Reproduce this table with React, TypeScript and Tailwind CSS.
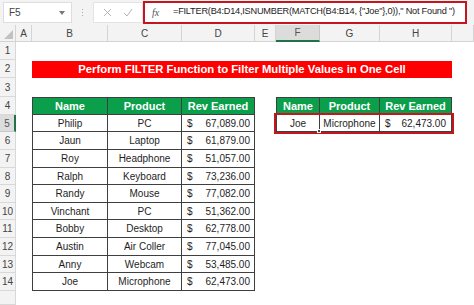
import React from "react";

interface Row {
  name: string;
  product: string;
  rev: string;
}

const data: Row[] = [
  { name: "Philip", product: "PC", rev: "67,089.00" },
  { name: "Jaun", product: "Laptop", rev: "61,879.00" },
  { name: "Roy", product: "Headphone", rev: "51,057.00" },
  { name: "Ralph", product: "Keyboard", rev: "73,236.00" },
  { name: "Randy", product: "Mouse", rev: "77,082.00" },
  { name: "Vinchant", product: "PC", rev: "51,362.00" },
  { name: "Bobby", product: "Desktop", rev: "62,778.00" },
  { name: "Austin", product: "Air Coller", rev: "77,045.00" },
  { name: "Anny", product: "Webcam", rev: "53,485.00" },
  { name: "Joe", product: "Microphone", rev: "62,473.00" },
];

const letters = ["A", "B", "C", "D", "E", "F", "G", "H", ""];

const FormulaBar = () => (
  <div className="h-[25px] bg-[#f3f3f3] flex items-center pl-[3px] pr-[7px]">
    {/* name box */}
    <div className="shrink-0 w-[69px] h-[21px] bg-white border border-[#dedede] flex items-center justify-between pl-[5px] pr-[6px]">
      <span className="text-[10px] text-[#444]">F5</span>
      <svg width="6" height="4" viewBox="0 0 6 4">
        <path d="M0 0 L6 0 L3 4 Z" fill="#777" />
      </svg>
    </div>
    {/* dotted separator */}
    <div className="shrink-0 w-[21px] flex flex-col items-center gap-[2px]">
      <span className="w-[1px] h-[1px] bg-[#aaa]" />
      <span className="w-[1px] h-[1px] bg-[#aaa]" />
      <span className="w-[1px] h-[1px] bg-[#aaa]" />
    </div>
    {/* cancel / enter */}
    <div className="shrink-0 w-[50px] h-[21px] bg-white border border-[#e4e4e4] flex items-center justify-around px-[4px]">
      <svg width="9" height="9" viewBox="0 0 9 9">
        <path d="M1 1 L8 8 M8 1 L1 8" stroke="#b5b5b5" strokeWidth="1" />
      </svg>
      <svg width="10" height="9" viewBox="0 0 10 9">
        <path d="M1 5 L4 8 L9 1" stroke="#b5b5b5" strokeWidth="1" fill="none" />
      </svg>
    </div>
    {/* formula input with red highlight */}
    <div className="flex-1 min-w-0 overflow-hidden h-[23px] -mt-[1px] bg-white border-2 border-[#c4161c] flex items-center">
      <span className="shrink-0 w-[27px] pl-[7px] text-[10px] italic text-[#555] font-['Liberation_Serif',serif]">
        fx
      </span>
      <span className="pl-[1px] text-[9.2px] tracking-[-0.22px] text-[#222] whitespace-nowrap">
        =FILTER(B4:D14,ISNUMBER(MATCH(B4:B14, {"{"}"Joe"{"}"},0)),"
        Not Found ")
      </span>
    </div>
  </div>
);

const hdr = "bg-[#0b9f4c] text-white font-bold text-[11px] flex items-center justify-center";
const cellBase = "flex items-center text-[10px] text-[#1e1e1e]";

const renderTableRow = (r: number) => {
  const out: React.ReactNode[] = [];
  // column A
  out.push(<div key="a" className="bg-white" />);

  if (r === 1 || r === 3 || r === 15) {
    for (let i = 0; i < 8; i++) out.push(<div key={i} className="bg-white" />);
    return out;
  }

  if (r === 2) {
    out.push(
      <div
        key="title"
        className="col-span-7 mt-[1px] bg-[#ff0000] text-white font-bold text-[11.3px] flex items-center justify-center"
      >
        Perform FILTER Function to Filter Multiple Values in One Cell
      </div>
    );
    out.push(<div key="i" className="bg-white" />);
    return out;
  }

  if (r === 4) {
    out.push(
      <div key="b" className={`${hdr} border border-[#3f3f3f]`}>Name</div>,
      <div key="c" className={`${hdr} border-y border-r border-[#3f3f3f]`}>Product</div>,
      <div key="d" className={`${hdr} border-y border-r border-[#3f3f3f]`}>Rev Earned</div>,
      <div key="e" className="bg-white" />,
      <div key="f" className={`${hdr} border-y border-l border-r border-[#3f3f3f]`}>Name</div>,
      <div key="g" className={`${hdr} border-y border-r border-[#3f3f3f]`}>Product</div>,
      <div key="h" className={`${hdr} border-y border-r border-[#3f3f3f]`}>Rev Earned</div>,
      <div key="i" className="bg-white" />
    );
    return out;
  }

  const d = data[r - 5];
  out.push(
    <div key="b" className={`${cellBase} justify-center border-l border-r border-b border-[#3f3f3f]`}>
      {d.name}
    </div>,
    <div key="c" className={`${cellBase} justify-center border-r border-b border-[#3f3f3f]`}>
      {d.product}
    </div>,
    <div key="d" className={`${cellBase} justify-between pl-[5px] pr-[4px] border-r border-b border-[#3f3f3f]`}>
      <span>$</span>
      <span>{d.rev}</span>
    </div>,
    <div key="e" className="bg-white" />
  );

  if (r === 5) {
    out.push(
      <div
        key="fgh"
        className="col-span-3 grid grid-cols-[44px_60px_72px] border-b border-[#3f3f3f] outline-2 outline-offset-0 outline-[#c4161c] relative"
      >
        <div className={`${cellBase} justify-center border-l border-r border-[#3f3f3f] relative`}>
          Joe
          <span className="absolute -right-[2px] -bottom-[2px] w-[4px] h-[4px] bg-[#444] border border-white" />
        </div>
        <div className={`${cellBase} justify-center border-r border-[#3f3f3f]`}>Microphone</div>
        <div className={`${cellBase} justify-between pl-[5px] pr-[5px] border-r border-[#3f3f3f]`}>
          <span>$</span>
          <span>62,473.00</span>
        </div>
      </div>
    );
  } else {
    for (let i = 0; i < 3; i++) out.push(<div key={"x" + i} className="bg-white" />);
  }
  out.push(<div key="i" className="bg-white" />);
  return out;
};

const App = () => {
  const rows = Array.from({ length: 15 }, (_, i) => i + 1);
  return (
    <div className="w-[474px] h-[305px] overflow-hidden bg-white font-['Liberation_Sans',Arial,sans-serif]">
      <FormulaBar />
      <div className="grid grid-cols-[16px_16px_76px_74px_73px_21px_44px_60px_72px_1fr] grid-rows-[17px_18px_18px_19px_18px_17px_18px_18px_17px_18px_17px_18px_18px_17px_18px_14px]">
        {/* corner */}
        <div className="bg-[#f3f3f3] border-r border-b border-[#d4d4d4] flex items-end justify-end pr-[2px] pb-[2px]">
          <svg width="9" height="9" viewBox="0 0 9 9">
            <path d="M9 0 L9 9 L0 9 Z" fill="#c2c2c2" />
          </svg>
        </div>
        {letters.map((l, i) => (
          <div
            key={"col" + i}
            className={
              l === "F"
                ? "bg-[#dcdcdc] border-r border-[#c8c8c8] border-b-2 border-b-[#217346] flex items-center justify-center text-[10px] text-[#555]"
                : "bg-[#f3f3f3] border-r border-b border-[#d4d4d4] flex items-center justify-center text-[10px] text-[#444]"
            }
          >
            {l}
          </div>
        ))}
        {rows.map((r) => (
          <React.Fragment key={r}>
            <div
              className={
                r === 5
                  ? "bg-[#dcdcdc] border-r-2 border-r-[#217346] border-b border-[#c8c8c8] flex items-center justify-center text-[10px] text-[#555]"
                  : "bg-[#f3f3f3] border-r border-b border-[#d8d8d8] flex items-center justify-center text-[10px] text-[#444]"
              }
            >
              {r < 15 ? r : ""}
            </div>
            {renderTableRow(r)}
          </React.Fragment>
        ))}
      </div>
    </div>
  );
};

export default App;
